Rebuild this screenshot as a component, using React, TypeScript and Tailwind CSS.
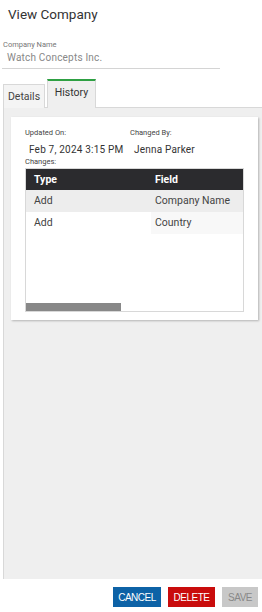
import React from 'react';

interface Change {
  type: string;
  field: string;
}

const changes: Change[] = [
  { type: 'Add', field: 'Company Name' },
  { type: 'Add', field: 'Country' },
];

const App: React.FC = () => {
  return (
    <div className="w-[262px] h-[612px] bg-white flex flex-col font-['Roboto',sans-serif] text-[#333]">
      <h1 className="pl-[8px] pt-[5px] text-[13.5px] leading-[19px] text-[#333] font-normal">View Company</h1>

      <div className="mt-[16px] ml-[2px] w-[218px] border-b border-[#d4d4d4] pb-[3px]">
        <div className="pl-[1px] text-[7.5px] leading-[10px] text-[#777]">Company Name</div>
        <div className="pl-[5px] text-[10px] leading-[14px] text-[#888] tracking-[0.2px] mt-[1px]">Watch Concepts Inc.</div>
      </div>

      <div className="flex items-end mt-[10px] pl-[3px] relative z-10">
        <div className="w-[42px] h-[24px] border border-[#d8d8d8] border-b-0 bg-[#f4f4f4] text-[10.5px] flex items-center justify-center text-[#444] mb-[-1px]">
          Details
        </div>
        <div className="w-[49px] h-[29px] ml-[2px] border-x border-[#d8d8d8] border-t-[2px] border-t-[#2ea043] bg-[#efefef] text-[10.5px] flex items-center justify-center text-[#333] mb-[-1px] pb-[4px]">
          History
        </div>
      </div>

      <div className="flex-1 ml-[3px] bg-[#efefef] border-l border-t border-[#d8d8d8] pt-[9px] pl-[7px] mb-[8px]">
        <div className="w-[247px] bg-white shadow-[1px_1px_2px_rgba(0,0,0,0.25)] pl-[14px] pr-[14px] pt-[11px] pb-[8px]">
          <div className="flex">
            <div className="w-[105px]">
              <div className="text-[7.5px] leading-[10px] text-[#444]">Updated On:</div>
              <div className="pl-[4px] text-[10px] leading-[15px] text-[#333] tracking-[0.2px] mt-[4px]">Feb 7, 2024 3:15 PM</div>
            </div>
            <div>
              <div className="text-[7.5px] leading-[10px] text-[#444]">Changed By:</div>
              <div className="pl-[4px] text-[10px] leading-[15px] text-[#333] tracking-[0.2px] mt-[4px]">Jenna Parker</div>
            </div>
          </div>
          <div className="text-[7.5px] leading-[10px] text-[#444]">Changes:</div>

          <div className="mt-[1px] w-[219px] h-[144px] border border-[#d8d8d8] flex flex-col">
            <div className="flex h-[21px] bg-[#2b2b2e] text-white text-[10.5px] font-bold items-center">
              <div className="w-[125px] pl-[8px]">Type</div>
              <div className="pl-[4px]">Field</div>
            </div>
            {changes.map((c, i) => (
              <div key={i} className="flex h-[22px] text-[10.5px] text-[#444] items-center">
                <div className={`w-[125px] h-full flex items-center pl-[8px] ${i === 0 ? 'bg-[#ededed]' : 'bg-white'}`}>{c.type}</div>
                <div className={`flex-1 h-full flex items-center pl-[4px] ${i === 0 ? 'bg-[#ededed]' : 'bg-[#f8f8f8]'}`}>{c.field}</div>
              </div>
            ))}
            <div className="flex-1" />
            <div className="h-[8px] w-[95px] bg-[#888]" />
          </div>
        </div>
      </div>

      <div className="flex justify-end gap-[7px] pr-[4px] pb-[5px] font-['Liberation_Sans',sans-serif]">
        <button className="w-[48px] h-[20px] bg-[#0d62a6] text-white text-[10px] tracking-[-0.5px]">CANCEL</button>
        <button className="w-[47px] h-[20px] bg-[#c90c0c] text-white text-[10px] tracking-[-0.5px]">DELETE</button>
        <button className="w-[36px] h-[20px] bg-[#c8c8c8] text-[#888] text-[10px] tracking-[-0.5px]">SAVE</button>
      </div>
    </div>
  );
};

export default App;
